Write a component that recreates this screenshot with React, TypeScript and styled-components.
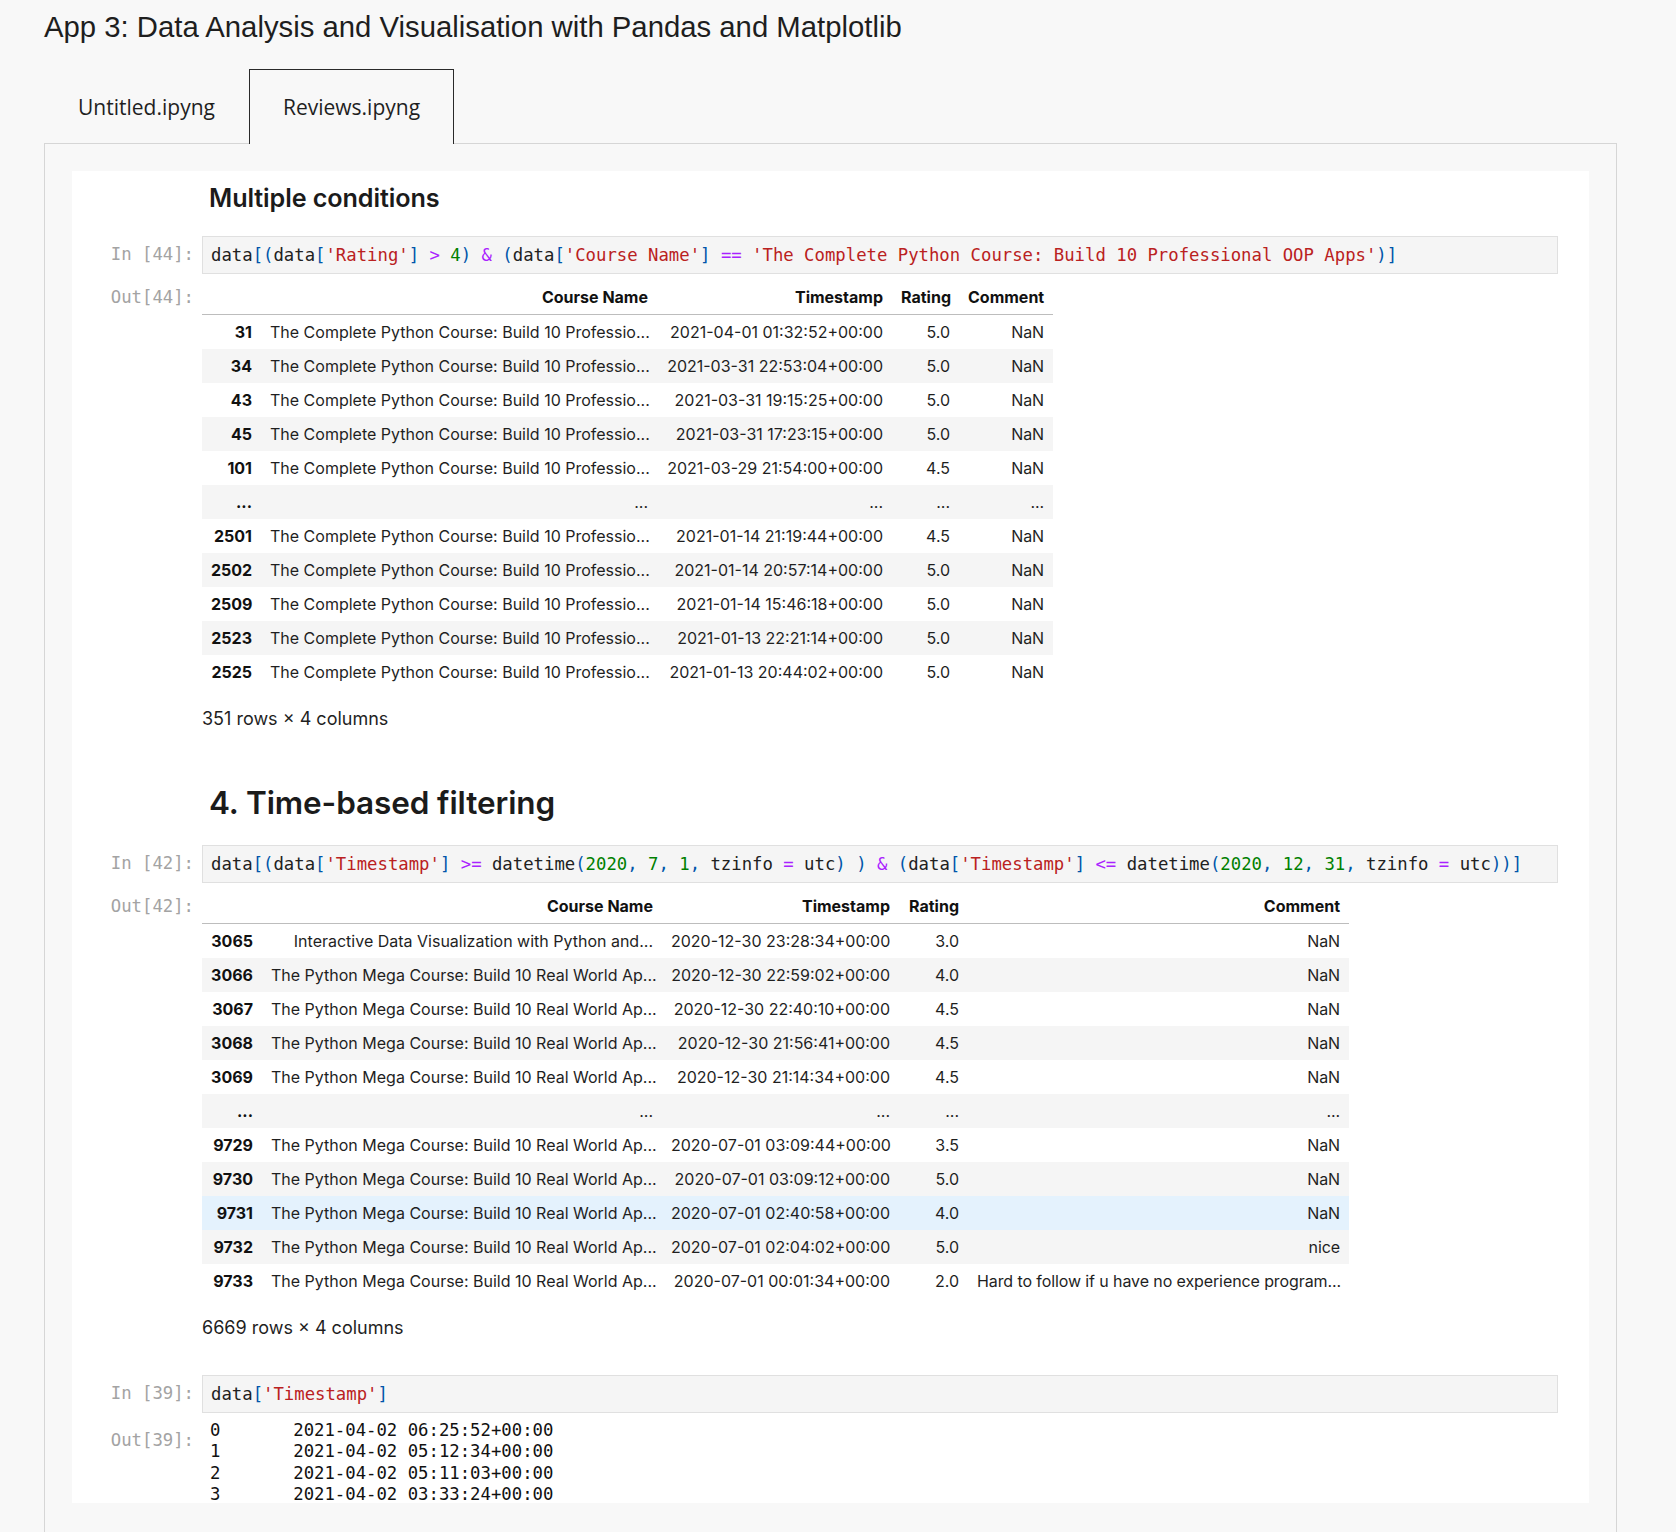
import React from "react";
import styled, { createGlobalStyle, css } from "styled-components";

const GlobalStyle = createGlobalStyle`
  html, body { margin: 0; padding: 0; background: #f8f8f8; }
  * { box-sizing: border-box; }
`;

const Page = styled.div`
  height: 100vh;
  overflow: hidden;
  display: flex;
  flex-direction: column;
  padding: 10px 59px 0 44px;
`;

const Title = styled.h1`
  margin: 0 0 26px;
  font-family: "Liberation Sans", Arial, sans-serif;
  font-weight: 400;
  font-size: 29.3px;
  line-height: 33px;
  color: #1e1e1e;
`;

const TabBar = styled.div`
  display: flex;
  height: 75px;
  margin-bottom: -1px;
  position: relative;
  z-index: 1;
`;

const Tab = styled.div<{ $active?: boolean }>`
  width: 205px;
  display: flex;
  align-items: center;
  justify-content: center;
  font-family: "Open Sans", sans-serif;
  font-size: 21px;
  color: #1f1f1f;
  border: 1px solid transparent;
  border-bottom: none;
  ${(p) =>
    p.$active &&
    css`
      background: #f8f8f8;
      border-color: #2a2a2a;
    `}
`;

const Panel = styled.div`
  flex: 1;
  min-height: 0;
  border: 1px solid #d6d6d6;
  border-bottom: none;
  background: #f8f8f8;
  padding: 27px 27px 0;
`;

const Notebook = styled.div`
  background: #ffffff;
  height: 1332px;
  overflow: hidden;
  padding: 12px 31px 0 0;
`;

const Cell = styled.div<{ $gap: number }>`
  display: grid;
  grid-template-columns: 130px minmax(0, 1fr);
  margin-top: ${(p) => p.$gap}px;
`;

const Prompt = styled.div<{ $pad: number }>`
  font-family: "DejaVu Sans Mono", monospace;
  font-size: 17.3px;
  line-height: 22px;
  color: #a3a3a3;
  text-align: right;
  padding: ${(p) => p.$pad}px 8px 0 0;
  white-space: pre;
`;

const Body = styled.div`
  min-width: 0;
`;

const Heading = styled.div<{ $level: 2 | 3 }>`
  font-family: Inter, "Noto Sans", sans-serif;
  font-weight: 600;
  color: #1b1b1b;
  padding-left: 7px;
  font-size: ${(p) => (p.$level === 2 ? 31.5 : 25.2)}px;
  line-height: ${(p) => (p.$level === 2 ? 38 : 31)}px;
  letter-spacing: -0.1px;
`;

const CodeBox = styled.div`
  background: #f5f5f5;
  border: 1px solid #e0e0e0;
  padding: 7px 8px;
  font-family: "DejaVu Sans Mono", monospace;
  font-size: 17.3px;
  line-height: 22px;
  white-space: pre;
  color: #212121;
`;

type Kind = "str" | "num" | "op" | "punc" | "plain";

const tokenColors: Record<Kind, string> = {
  str: "#ba2121",
  num: "#008000",
  op: "#aa22ff",
  punc: "#0055aa",
  plain: "#212121",
};

const Tok = styled.span<{ $kind: Kind }>`
  color: ${(p) => tokenColors[p.$kind]};
`;

function tokenize(src: string): { kind: Kind; text: string }[] {
  const re = /('[^']*')|(\d+)|(>=|<=|==|[><&=])|([\[\]\(\),])|([^'\d><&=\[\]\(\),]+)/g;
  const out: { kind: Kind; text: string }[] = [];
  let m: RegExpExecArray | null;
  while ((m = re.exec(src))) {
    if (m[1]) out.push({ kind: "str", text: m[1] });
    else if (m[2]) out.push({ kind: "num", text: m[2] });
    else if (m[3]) out.push({ kind: "op", text: m[3] });
    else if (m[4]) out.push({ kind: "punc", text: m[4] });
    else out.push({ kind: "plain", text: m[5] });
  }
  return out;
}

const Code = ({ src }: { src: string }) => (
  <CodeBox>
    {tokenize(src).map((t, i) => (
      <Tok key={i} $kind={t.kind}>
        {t.text}
      </Tok>
    ))}
  </CodeBox>
);

const Table = styled.table`
  border-collapse: collapse;
  table-layout: fixed;
  font-family: Inter, "Noto Sans", sans-serif;
  font-size: 16px;
  line-height: 18px;
  color: #1f1f1f;
`;

const HeadRow = styled.tr`
  border-bottom: 1px solid #bdbdbd;
`;

const Th = styled.th`
  padding: 8px 9px;
  text-align: right;
  font-weight: 700;
  white-space: nowrap;
  color: #111;
`;

const Tr = styled.tr<{ $shade: "none" | "grey" | "blue" }>`
  background: ${(p) =>
    p.$shade === "grey" ? "#f5f5f5" : p.$shade === "blue" ? "#e4f2fd" : "transparent"};
`;

const Td = styled.td`
  padding: 8px 9px;
  text-align: right;
  white-space: nowrap;
  overflow: hidden;
`;

const CommentTd = styled(Td)`
  letter-spacing: -0.1px;
`;

const Caption = styled.div`
  margin-top: 20px;
  font-family: Inter, "Noto Sans", sans-serif;
  font-size: 18px;
  line-height: 20px;
  color: #1f1f1f;
`;

const SeriesOut = styled.pre`
  margin: 0;
  padding-left: 8px;
  font-family: "DejaVu Sans Mono", monospace;
  font-size: 17.3px;
  line-height: 21.3px;
  color: #111;
`;

type Row = [string, string, string, string, string];

const DataFrame = ({
  widths,
  rows,
  hover,
}: {
  widths: number[];
  rows: Row[];
  hover?: number;
}) => (
  <Table style={{ width: widths.reduce((a, b) => a + b, 0) }}>
    <colgroup>
      {widths.map((w, i) => (
        <col key={i} style={{ width: w }} />
      ))}
    </colgroup>
    <thead>
      <HeadRow>
        <Th></Th>
        <Th>Course Name</Th>
        <Th>Timestamp</Th>
        <Th>Rating</Th>
        <Th>Comment</Th>
      </HeadRow>
    </thead>
    <tbody>
      {rows.map((r, i) => (
        <Tr key={i} $shade={i === hover ? "blue" : i % 2 === 1 ? "grey" : "none"}>
          <Th>{r[0]}</Th>
          <Td>{r[1]}</Td>
          <Td>{r[2]}</Td>
          <Td>{r[3]}</Td>
          <CommentTd>{r[4]}</CommentTd>
        </Tr>
      ))}
    </tbody>
  </Table>
);

const CP = "The Complete Python Course: Build 10 Professio...";
const PM = "The Python Mega Course: Build 10 Real World Ap...";
const DOTS: Row = ["...", "...", "...", "...", "..."];

const rows1: Row[] = [
  ["31", CP, "2021-04-01 01:32:52+00:00", "5.0", "NaN"],
  ["34", CP, "2021-03-31 22:53:04+00:00", "5.0", "NaN"],
  ["43", CP, "2021-03-31 19:15:25+00:00", "5.0", "NaN"],
  ["45", CP, "2021-03-31 17:23:15+00:00", "5.0", "NaN"],
  ["101", CP, "2021-03-29 21:54:00+00:00", "4.5", "NaN"],
  DOTS,
  ["2501", CP, "2021-01-14 21:19:44+00:00", "4.5", "NaN"],
  ["2502", CP, "2021-01-14 20:57:14+00:00", "5.0", "NaN"],
  ["2509", CP, "2021-01-14 15:46:18+00:00", "5.0", "NaN"],
  ["2523", CP, "2021-01-13 22:21:14+00:00", "5.0", "NaN"],
  ["2525", CP, "2021-01-13 20:44:02+00:00", "5.0", "NaN"],
];

const rows2: Row[] = [
  ["3065", "Interactive Data Visualization with Python and...", "2020-12-30 23:28:34+00:00", "3.0", "NaN"],
  ["3066", PM, "2020-12-30 22:59:02+00:00", "4.0", "NaN"],
  ["3067", PM, "2020-12-30 22:40:10+00:00", "4.5", "NaN"],
  ["3068", PM, "2020-12-30 21:56:41+00:00", "4.5", "NaN"],
  ["3069", PM, "2020-12-30 21:14:34+00:00", "4.5", "NaN"],
  DOTS,
  ["9729", PM, "2020-07-01 03:09:44+00:00", "3.5", "NaN"],
  ["9730", PM, "2020-07-01 03:09:12+00:00", "5.0", "NaN"],
  ["9731", PM, "2020-07-01 02:40:58+00:00", "4.0", "NaN"],
  ["9732", PM, "2020-07-01 02:04:02+00:00", "5.0", "nice"],
  ["9733", PM, "2020-07-01 00:01:34+00:00", "2.0", "Hard to follow if u have no experience program..."],
];

const series = [
  "0       2021-04-02 06:25:52+00:00",
  "1       2021-04-02 05:12:34+00:00",
  "2       2021-04-02 05:11:03+00:00",
  "3       2021-04-02 03:33:24+00:00",
].join("\n");

export default function App() {
  return (
    <>
      <GlobalStyle />
      <Page>
        <Title>App 3: Data Analysis and Visualisation with Pandas and Matplotlib</Title>
        <TabBar>
          <Tab>Untitled.ipyng</Tab>
          <Tab $active>Reviews.ipyng</Tab>
        </TabBar>
        <Panel>
          <Notebook>
            <Cell $gap={0}>
              <Prompt $pad={0}></Prompt>
              <Body>
                <Heading $level={3}>Multiple conditions</Heading>
              </Body>
            </Cell>
            <Cell $gap={22}>
              <Prompt $pad={7}>In [44]:</Prompt>
              <Body>
                <Code src="data[(data['Rating'] > 4) & (data['Course Name'] == 'The Complete Python Course: Build 10 Professional OOP Apps')]" />
              </Body>
            </Cell>
            <Cell $gap={6}>
              <Prompt $pad={6}>Out[44]:</Prompt>
              <Body>
                <DataFrame widths={[59, 396, 235, 67, 94]} rows={rows1} />
                <Caption>351 rows × 4 columns</Caption>
              </Body>
            </Cell>
            <Cell $gap={55}>
              <Prompt $pad={0}></Prompt>
              <Body>
                <Heading $level={2}>4. Time-based filtering</Heading>
              </Body>
            </Cell>
            <Cell $gap={23}>
              <Prompt $pad={7}>In [42]:</Prompt>
              <Body>
                <Code src="data[(data['Timestamp'] >= datetime(2020, 7, 1, tzinfo = utc) ) & (data['Timestamp'] <= datetime(2020, 12, 31, tzinfo = utc))]" />
              </Body>
            </Cell>
            <Cell $gap={6}>
              <Prompt $pad={6}>Out[42]:</Prompt>
              <Body>
                <DataFrame widths={[60, 400, 237, 69, 381]} rows={rows2} hover={8} />
                <Caption>6669 rows × 4 columns</Caption>
              </Body>
            </Cell>
            <Cell $gap={37}>
              <Prompt $pad={7}>In [39]:</Prompt>
              <Body>
                <Code src="data['Timestamp']" />
              </Body>
            </Cell>
            <Cell $gap={7}>
              <Prompt $pad={9}>Out[39]:</Prompt>
              <Body>
                <SeriesOut>{series}</SeriesOut>
              </Body>
            </Cell>
          </Notebook>
        </Panel>
      </Page>
    </>
  );
}
